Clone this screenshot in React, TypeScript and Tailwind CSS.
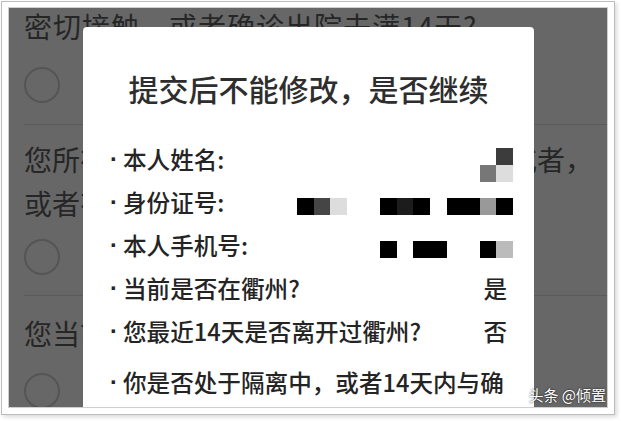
import React from "react";

const FONT = { fontFamily: '"Noto Sans CJK SC", "Noto Sans", sans-serif' };

// redaction mosaic cells, right aligned in the value column
const NAME_TOP = [null, "#3c3c3c"];
const NAME_BOTTOM = ["#777777", "#dddddd"];
const ID_CELLS = ["#000", "#454545", "#dddddd", null, null, "#000", "#1c1c1c", "#000", null, "#000", "#000", "#999999", "#000"];
const PHONE_CELLS = ["#000", null, "#000", "#000", null, null, "#000", "#bbbbbb"];

function Cells({ cells }: { cells: (string | null)[] }) {
  return (
    <div className="-mr-[6px] flex">
      {cells.map((c, i) => (
        <span key={i} className="h-[17px] w-[16.6px]" style={{ background: c ?? "transparent" }} />
      ))}
    </div>
  );
}

function Radio() {
  return <div className="h-[36px] w-[36px] rounded-full border-2 border-[#555]" />;
}

function Dot() {
  return <span className="w-[13px] shrink-0 font-['Liberation_Sans',sans-serif] font-bold">·</span>;
}

function Row({ label, children }: { label: string; children?: React.ReactNode }) {
  return (
    <div className="flex h-[43px] items-center justify-between">
      <div className="flex">
        <Dot />
        <span>{label}</span>
      </div>
      {children}
    </div>
  );
}

export default function App() {
  return (
    <div className="h-[421px] w-[621px] bg-white p-px" style={FONT}>
      <div className="h-[414px] w-[614px] border border-[#bdbdbd] bg-white pl-[6px] pt-[5px] shadow-[2px_2px_4px_rgba(0,0,0,0.15)]">
        <div className="relative h-[401px] w-[600px] overflow-hidden border border-[#cfcfcf] bg-[#676767] text-[#262626]">
          {/* page behind the dialog */}
          <div className="pl-[15px] text-[28px]">
            <div className="-mt-[4px] border-b border-[#5a5a5a] pb-[21px]">
              <div className="leading-[44px] tracking-[1px] whitespace-nowrap">密切接触，或者确诊出院未满14天?</div>
              <div className="mt-[19px]">
                <Radio />
              </div>
            </div>
            <div className="border-b border-[#5a5a5a] pb-[20px] pt-[12px]">
              <div className="flex justify-between pr-[14px] leading-[44px]">
                <span>您所在小区是否有确诊</span>
                <span>或者，</span>
              </div>
              <div className="leading-[44px]">或者有发热症状人员？</div>
              <div className="mt-[14px]">
                <Radio />
              </div>
            </div>
            <div className="pt-[15px]">
              <div className="leading-[44px]">您当前的健康状况</div>
              <div className="mt-[18px]">
                <Radio />
              </div>
            </div>
          </div>

          {/* confirm dialog */}
          <div className="absolute left-[74px] top-[19px] h-[420px] w-[451px] rounded-[4px] bg-white px-[27px] text-[#242424]">
            <div className="pt-[41px] text-center text-[30px] font-medium leading-[40px] text-[#2e2e2e]">
              提交后不能修改，是否继续
            </div>
            <div className="mt-[30px] text-[23.6px] font-medium">
              <Row label="本人姓名:">
                <div className="-mr-[6px] mt-[10px] flex flex-col">
                  <div className="flex">
                    {NAME_TOP.map((c, i) => (
                      <span key={i} className="h-[17px] w-[16.6px]" style={{ background: c ?? "transparent" }} />
                    ))}
                  </div>
                  <div className="flex">
                    {NAME_BOTTOM.map((c, i) => (
                      <span key={i} className="h-[17px] w-[16.6px]" style={{ background: c }} />
                    ))}
                  </div>
                </div>
              </Row>
              <Row label="身份证号:">
                <div className="mt-[7px]">
                  <Cells cells={ID_CELLS} />
                </div>
              </Row>
              <Row label="本人手机号:">
                <div className="mt-[7px]">
                  <Cells cells={PHONE_CELLS} />
                </div>
              </Row>
              <Row label="当前是否在衢州?">
                <span>是</span>
              </Row>
              <Row label="您最近14天是否离开过衢州?">
                <span>否</span>
              </Row>
              <div className="mt-[8px] flex leading-[43px]">
                <Dot />
                <div>
                  <div className="whitespace-nowrap">你是否处于隔离中，或者14天内与确</div>
                  <div>诊病例密切接触？</div>
                </div>
              </div>
            </div>
          </div>

          {/* watermark */}
          <div className="absolute bottom-[2px] right-[1px] text-[15px] leading-[20px] text-white [text-shadow:0_0_2px_rgba(0,0,0,0.9)]">
            头条 @倾置
          </div>
        </div>
      </div>
    </div>
  );
}
